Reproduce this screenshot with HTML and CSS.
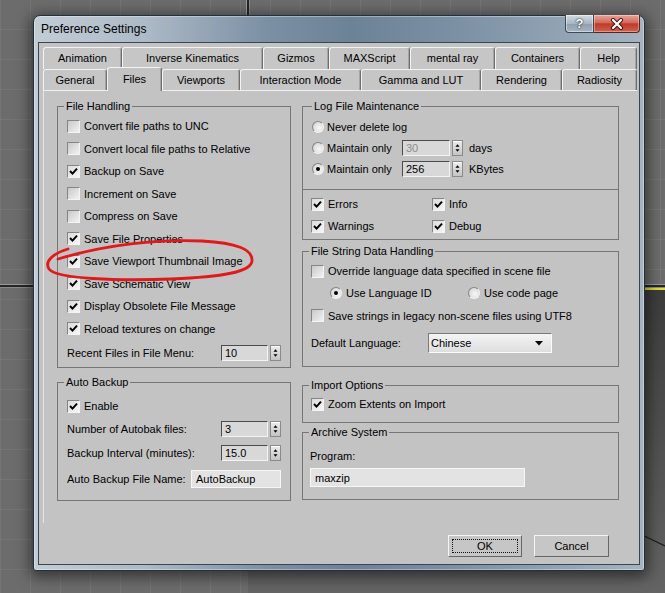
FILE: index.html
```html
<!DOCTYPE html>
<html lang="en">
<head>
<meta charset="utf-8">
<title>Preference Settings</title>
<link rel="stylesheet" href="styles.css">
</head>
<body>
<div class="desktop">
  <div class="vp-vline"></div>
  <div class="vp-hline"></div>
  <div class="vp-active"></div>
  <svg class="vp-edge" width="665" height="593" viewBox="0 0 665 593"><path d="M636 532 L665 546" stroke="#1e1e1e" stroke-width="1.2" fill="none"/></svg>

  <div class="window">
    <div class="titlebar">
      <span class="title">Preference Settings</span>
      <div class="caption">
        <div class="cbtn help">?</div>
        <div class="cbtn close"><svg width="14" height="12" viewBox="0 0 14 12"><path d="M3 2 L11 10 M11 2 L3 10" stroke="#3a1410" stroke-width="4" stroke-linecap="round"/><path d="M3 2 L11 10 M11 2 L3 10" stroke="#fff" stroke-width="2.2" stroke-linecap="round"/></svg></div>
      </div>
    </div>
    <div class="client">
      <div class="tabs">
        <div class="tabrow back">
          <div class="tab">Animation</div>
          <div class="tab">Inverse Kinematics</div>
          <div class="tab">Gizmos</div>
          <div class="tab">MAXScript</div>
          <div class="tab">mental ray</div>
          <div class="tab">Containers</div>
          <div class="tab">Help</div>
        </div>
        <div class="tabrow front">
          <div class="tab">General</div>
          <div class="tab active">Files</div>
          <div class="tab">Viewports</div>
          <div class="tab">Interaction Mode</div>
          <div class="tab">Gamma and LUT</div>
          <div class="tab">Rendering</div>
          <div class="tab">Radiosity</div>
        </div>
      </div>

      <div class="panel">
        <div class="col col-left">
          <div class="group g-fh">
            <span class="legend">File Handling</span>
            <div class="row c"><span class="cb"></span>Convert file paths to UNC</div>
            <div class="row c"><span class="cb"></span>Convert local file paths to Relative</div>
            <div class="row c"><span class="cb on"><svg viewBox="0 0 11 11"><polyline points="2,5 4.5,7.6 9,2.6"/></svg></span>Backup on Save</div>
            <div class="row c"><span class="cb"></span>Increment on Save</div>
            <div class="row c"><span class="cb"></span>Compress on Save</div>
            <div class="row c"><span class="cb on"><svg viewBox="0 0 11 11"><polyline points="2,5 4.5,7.6 9,2.6"/></svg></span>Save File Properties</div>
            <div class="row c"><span class="cb on"><svg viewBox="0 0 11 11"><polyline points="2,5 4.5,7.6 9,2.6"/></svg></span>Save Viewport Thumbnail Image</div>
            <div class="row c"><span class="cb on"><svg viewBox="0 0 11 11"><polyline points="2,5 4.5,7.6 9,2.6"/></svg></span>Save Schematic View</div>
            <div class="row c"><span class="cb on"><svg viewBox="0 0 11 11"><polyline points="2,5 4.5,7.6 9,2.6"/></svg></span>Display Obsolete File Message</div>
            <div class="row c"><span class="cb on"><svg viewBox="0 0 11 11"><polyline points="2,5 4.5,7.6 9,2.6"/></svg></span>Reload textures on change</div>
            <div class="row spin-row">
              <span>Recent Files in File Menu:</span>
              <span class="spinner"><span class="field">10</span><svg class="arrows" width="11" height="16" viewBox="0 0 11 16"><path d="M3 6.5 L5.5 3.5 L8 6.5Z M3 9.5 L5.5 12.5 L8 9.5Z" fill="#000"/></svg></span>
            </div>
          </div>

          <div class="group g-ab">
            <span class="legend">Auto Backup</span>
            <div class="row h22"><span class="cb on"><svg viewBox="0 0 11 11"><polyline points="2,5 4.5,7.6 9,2.6"/></svg></span>Enable</div>
            <div class="row h23">
              <span>Number of Autobak files:</span>
              <span class="spinner"><span class="field">3</span><svg class="arrows" width="11" height="16" viewBox="0 0 11 16"><path d="M3 6.5 L5.5 3.5 L8 6.5Z M3 9.5 L5.5 12.5 L8 9.5Z" fill="#000"/></svg></span>
            </div>
            <div class="row h26">
              <span>Backup Interval (minutes):</span>
              <span class="spinner"><span class="field">15.0</span><svg class="arrows" width="11" height="16" viewBox="0 0 11 16"><path d="M3 6.5 L5.5 3.5 L8 6.5Z M3 9.5 L5.5 12.5 L8 9.5Z" fill="#000"/></svg></span>
            </div>
            <div class="row h26">
              <span>Auto Backup File Name:</span>
              <span class="textfield name-field">AutoBackup</span>
            </div>
          </div>
        </div>

        <div class="col col-right">
          <div class="group g-log">
            <span class="legend legend-log">Log File Maintenance</span>
            <div class="log-top">
              <div class="row h21"><span class="rb"></span>Never delete log</div>
              <div class="row h21"><span class="rb"></span><span class="rlabel">Maintain only</span>
                <span class="spinner"><span class="field dis">30</span><svg class="arrows" width="11" height="16" viewBox="0 0 11 16"><path d="M3 6.5 L5.5 3.5 L8 6.5Z M3 9.5 L5.5 12.5 L8 9.5Z" fill="#000"/></svg></span><span class="unit">days</span></div>
              <div class="row h22"><span class="rb on"></span><span class="rlabel">Maintain only</span>
                <span class="spinner"><span class="field">256</span><svg class="arrows" width="11" height="16" viewBox="0 0 11 16"><path d="M3 6.5 L5.5 3.5 L8 6.5Z M3 9.5 L5.5 12.5 L8 9.5Z" fill="#000"/></svg></span><span class="unit">KBytes</span></div>
            </div>
            <div class="log-bottom">
              <div class="row"><span class="cb on"><svg viewBox="0 0 11 11"><polyline points="2,5 4.5,7.6 9,2.6"/></svg></span>Errors</div>
              <div class="row"><span class="cb on"><svg viewBox="0 0 11 11"><polyline points="2,5 4.5,7.6 9,2.6"/></svg></span>Info</div>
              <div class="row"><span class="cb on"><svg viewBox="0 0 11 11"><polyline points="2,5 4.5,7.6 9,2.6"/></svg></span>Warnings</div>
              <div class="row"><span class="cb on"><svg viewBox="0 0 11 11"><polyline points="2,5 4.5,7.6 9,2.6"/></svg></span>Debug</div>
            </div>
          </div>

          <div class="group g-fs">
            <span class="legend">File String Data Handling</span>
            <div class="row h20"><span class="cb"></span>Override language data specified in scene file</div>
            <div class="row h23 radios">
              <span class="ritem"><span class="rb on"></span>Use Language ID</span>
              <span class="ritem"><span class="rb"></span>Use code page</span>
            </div>
            <div class="row h23"><span class="cb"></span>Save strings in legacy non-scene files using UTF8</div>
            <div class="row h32">
              <span class="dl-label">Default Language:</span>
              <span class="dropdown">Chinese<svg width="8" height="5" viewBox="0 0 8 5"><path d="M0 0 H8 L4 4.5Z" fill="#000"/></svg></span>
            </div>
          </div>

          <div class="group g-imp">
            <span class="legend">Import Options</span>
            <div class="row h22"><span class="cb on"><svg viewBox="0 0 11 11"><polyline points="2,5 4.5,7.6 9,2.6"/></svg></span>Zoom Extents on Import</div>
          </div>

          <div class="group g-arc">
            <span class="legend">Archive System</span>
            <div class="row h20">Program:</div>
            <span class="textfield prog-field">maxzip</span>
          </div>
        </div>
      </div>

      <div class="buttons">
        <div class="btn ok"><span>OK</span></div>
        <div class="btn cancel"><span>Cancel</span></div>
      </div>
    </div>
  </div>

  <svg class="annotation" width="665" height="593" viewBox="0 0 665 593">
    <path d="M68 249 C54 253 44 261 49 269 C56 279 118 281 172 279 C222 277 251 272 252 261 C253 249 236 243 202 241 C160 239 108 244 58 259" fill="none" stroke="#e0191b" stroke-width="2.8" stroke-linecap="round"/>
  </svg>
</div>
</body>
</html>
```

FILE: styles.css
```css
* { box-sizing: border-box; }
html, body { margin: 0; padding: 0; }
body {
  font-family: "Liberation Sans", Arial, sans-serif;
  font-size: 11px;
  color: #000;
  background: #6b6b6b;
}

/* desktop / viewports */
.desktop {
  position: relative;
  width: 665px;
  height: 593px;
  overflow: hidden;
  padding: 15px 0 0 33px;
  background-color: #6c6c6c;
  background-image:
    linear-gradient(90deg, rgba(255,255,255,.055) 1px, transparent 1px),
    linear-gradient(0deg, rgba(255,255,255,.055) 1px, transparent 1px);
  background-size: 30px 30px;
}
.vp-vline {
  position: absolute;
  left: 246px; top: 0;
  width: 4px; height: 290px;
  background: linear-gradient(90deg, #9a9a9a 0 1px, #262626 1px 3px, #8a8a8a 3px);
}
.vp-hline {
  position: absolute;
  left: 0; top: 284px;
  width: 665px; height: 4px;
  background: linear-gradient(#9a9a9a 0 1px, #262626 1px 3px, #8a8a8a 3px);
}
.vp-active {
  position: absolute;
  left: 248px; top: 288px;
  width: 417px; height: 305px;
  border-top: 2px solid #dede3a;
  background: linear-gradient(#3c3c3c, #646464);
}
.vp-edge { position: absolute; left: 0; top: 0; }

/* window */
.window {
  position: relative;
  width: 612px;
  height: 556px;
  display: flex;
  flex-direction: column;
  padding: 0 4px 5px;
  border: 1px solid #25303a;
  border-radius: 7px 7px 3px 3px;
  background: linear-gradient(90deg, #c2ccd5 0%, #adbac7 18%, #7c90a4 38%, #6c8297 52%, #7d91a5 70%, #93a5b5 88%, #a6b4c1 100%);
  box-shadow: inset 0 0 0 1px rgba(255,255,255,.35), 0 3px 14px 3px rgba(0,0,0,.5);
}
.titlebar {
  height: 26px;
  display: flex;
  align-items: center;
  padding-left: 3px;
}
.title { font-size: 12px; color: #000; }
.caption {
  margin-left: auto;
  align-self: flex-start;
  margin-top: -1px;
  display: flex;
  height: 18px;
}
.cbtn {
  height: 18px;
  display: flex;
  align-items: center;
  justify-content: center;
  border: 1px solid #3c4a58;
  border-top: none;
}
.help {
  width: 29px;
  border-radius: 0 0 0 4px;
  background: linear-gradient(#d3dce4, #a8b6c3 50%, #8e9fb0 51%, #a7b5c2);
  color: #fff;
  font-weight: bold;
  font-size: 13px;
  text-shadow: 0 0 1px #1e2a36, 0 0 2px #1e2a36;
  box-shadow: inset 0 0 0 1px rgba(255,255,255,.45);
}
.close {
  width: 46px;
  border-left: none;
  border-color: #5a241e;
  border-radius: 0 0 4px 0;
  background: linear-gradient(#e7a597, #d06a5a 45%, #c23a2b 52%, #d0604c);
  box-shadow: inset 0 0 0 1px rgba(255,255,255,.35);
}

/* client */
.client {
  flex: 1;
  border: 1px solid #3a4753;
  background: #c3c3c3;
  padding: 4px 2px 0 4px;
  display: flex;
  flex-direction: column;
}

/* tabs */
.tabs { height: 43px; display: flex; flex-direction: column; }
.tabrow { display: flex; }
.tabrow.back { height: 22px; }
.tabrow.front { height: 21px; align-items: flex-end; }
.tab {
  flex: none;
  height: 22px;
  display: flex;
  align-items: center;
  justify-content: center;
  padding-bottom: 2px;
  white-space: nowrap;
  background: #c6c6c6;
  border: 1px solid;
  border-bottom: none;
  border-color: #f3f3f3 #6e6e6e transparent #f3f3f3;
  border-radius: 3px 3px 0 0;
  box-shadow: inset -1px 0 0 #a5a5a5;
}
.front .tab { height: 21px; padding-bottom: 1px; }
.front .tab.active {
  position: relative;
  z-index: 2;
  height: 24px;
  margin-bottom: -1px;
  background: #c3c3c3;
  padding-bottom: 2px;
}
.back .tab:nth-child(1) { width: 79px; }
.back .tab:nth-child(2) { width: 141px; }
.back .tab:nth-child(3) { width: 66px; }
.back .tab:nth-child(4) { width: 81px; }
.back .tab:nth-child(5) { width: 85px; }
.back .tab:nth-child(6) { width: 85px; }
.back .tab:nth-child(7) { width: 57px; }
.front .tab:nth-child(1) { width: 64px; }
.front .tab:nth-child(2) { width: 55px; }
.front .tab:nth-child(3) { width: 78px; }
.front .tab:nth-child(4) { width: 121px; }
.front .tab:nth-child(5) { width: 120px; }
.front .tab:nth-child(6) { width: 81px; }
.front .tab:nth-child(7) { width: 75px; }

/* panel */
.panel {
  height: 433px;
  border-top: 1px solid #efefef;
  border-left: 1px solid #e6e6e6;
  padding: 15px 0 0 13px;
  display: flex;
  gap: 11px;
}
.col { display: flex; flex-direction: column; }
.col-left { width: 234px; }
.col-right { width: 317px; }

.group {
  position: relative;
  border: 1px solid #767676;
}
.legend {
  position: absolute;
  top: -7px;
  left: 6px;
  padding: 0 2px;
  line-height: 13px;
  background: #c3c3c3;
  white-space: nowrap;
}
.legend-log { left: 9px; }

.row {
  display: flex;
  align-items: center;
  white-space: nowrap;
}
.row.c { height: 22.5px; }
.h20 { height: 20px; }
.h21 { height: 21px; }
.h22 { height: 22px; }
.h23 { height: 23px; }
.h26 { height: 26px; }
.h32 { height: 32px; }

/* checkbox */
.cb {
  flex: none;
  width: 13px;
  height: 13px;
  margin-right: 4px;
  border: 1px solid;
  border-color: #858585 #f4f4f4 #f4f4f4 #858585;
  background: linear-gradient(135deg, #c9c9c9, #f2f2f2);
  display: flex;
  align-items: center;
  justify-content: center;
}
.cb.on { background: linear-gradient(135deg, #dcdcdc, #f6f6f6); }
.cb svg { width: 11px; height: 11px; }
.cb polyline { fill: none; stroke: #000; stroke-width: 2; }

/* radio */
.rb {
  flex: none;
  width: 12px;
  height: 12px;
  margin-right: 3px;
  border-radius: 50%;
  border: 1px solid;
  border-color: #858585 #f2f2f2 #f2f2f2 #858585;
  background: radial-gradient(circle at 60% 60%, #f7f7f7, #cfcfcf);
  display: flex;
  align-items: center;
  justify-content: center;
}
.rb.on::after {
  content: "";
  width: 4px;
  height: 4px;
  border-radius: 50%;
  background: #000;
}

/* spinners and fields */
.spinner { display: flex; align-items: center; }
.spin-row .spinner, .g-ab .spinner { margin-left: auto; }
.field {
  width: 47px;
  height: 16px;
  line-height: 14px;
  padding-left: 3px;
  border: 1px solid;
  border-color: #4c4c4c #f4f4f4 #f4f4f4 #4c4c4c;
  background: #d8d8d8;
}
.field.dis { color: #8c8c8c; }
.arrows {
  margin-left: 2px;
  background: linear-gradient(#ececec, #c4c4c4);
  border: 1px solid #8a8a8a;
  box-shadow: inset 0 1px 0 #fff;
}
.textfield {
  display: flex;
  align-items: center;
  padding-left: 4px;
  background: #e3e3e3;
  border: 1px solid #f7f7f7;
}
.name-field { margin-left: auto; width: 90px; height: 18px; }

/* left groups */
.g-fh { height: 262px; padding: 8px 9px 0 9px; }
.g-fh .spin-row { height: 26px; }
.g-ab { margin-top: 14px; height: 119px; padding: 12px 9px 0 9px; }

/* right groups */
.g-log { height: 134px; }
.log-top { height: 82px; padding: 9px 0 0 9px; }
.rlabel { width: 75px; }
.g-log .field { width: 48px; }
.unit { margin-left: 6px; }
.log-bottom {
  border-top: 1px solid #767676;
  padding: 3px 0 0 8px;
  display: grid;
  grid-template-columns: 121px auto;
  grid-auto-rows: 22px;
}

.g-fs { margin-top: 11px; height: 116px; padding: 9px 8px 0 8px; }
.radios { padding-left: 19px; }
.ritem { display: flex; align-items: center; }
.ritem:first-child { width: 138px; }
.ritem .rb { margin-right: 4px; }
.dl-label { width: 117px; }
.dropdown {
  width: 124px;
  height: 20px;
  display: flex;
  align-items: center;
  padding-left: 2px;
  border: 1px solid;
  border-color: #7a7a7a #fbfbfb #fbfbfb #7a7a7a;
  background: linear-gradient(#f4f4f4, #dedede);
}
.dropdown svg { margin-left: auto; margin-right: 8px; }

.g-imp { margin-top: 18px; height: 38px; padding: 7px 8px 0 8px; }
.g-arc { margin-top: 9px; height: 68px; padding: 13px 7px 0 7px; }
.prog-field { margin-top: 2px; width: 215px; height: 19px; }

/* buttons */
.buttons {
  display: flex;
  justify-content: flex-end;
  gap: 12px;
  margin-top: 12px;
  padding-right: 28px;
}
.btn {
  width: 75px;
  height: 22px;
  display: flex;
  padding: 3px;
  border: 1px solid;
  border-color: #f5f5f5 #666 #666 #f5f5f5;
  background: #c6c6c6;
}
.btn span {
  flex: 1;
  display: flex;
  align-items: center;
  justify-content: center;
  border: 1px dotted transparent;
}
.btn.ok { width: 74px; }
.btn.ok span { border-color: #111; }

.annotation {
  position: absolute;
  left: 0;
  top: 0;
  z-index: 5;
  pointer-events: none;
}
```
